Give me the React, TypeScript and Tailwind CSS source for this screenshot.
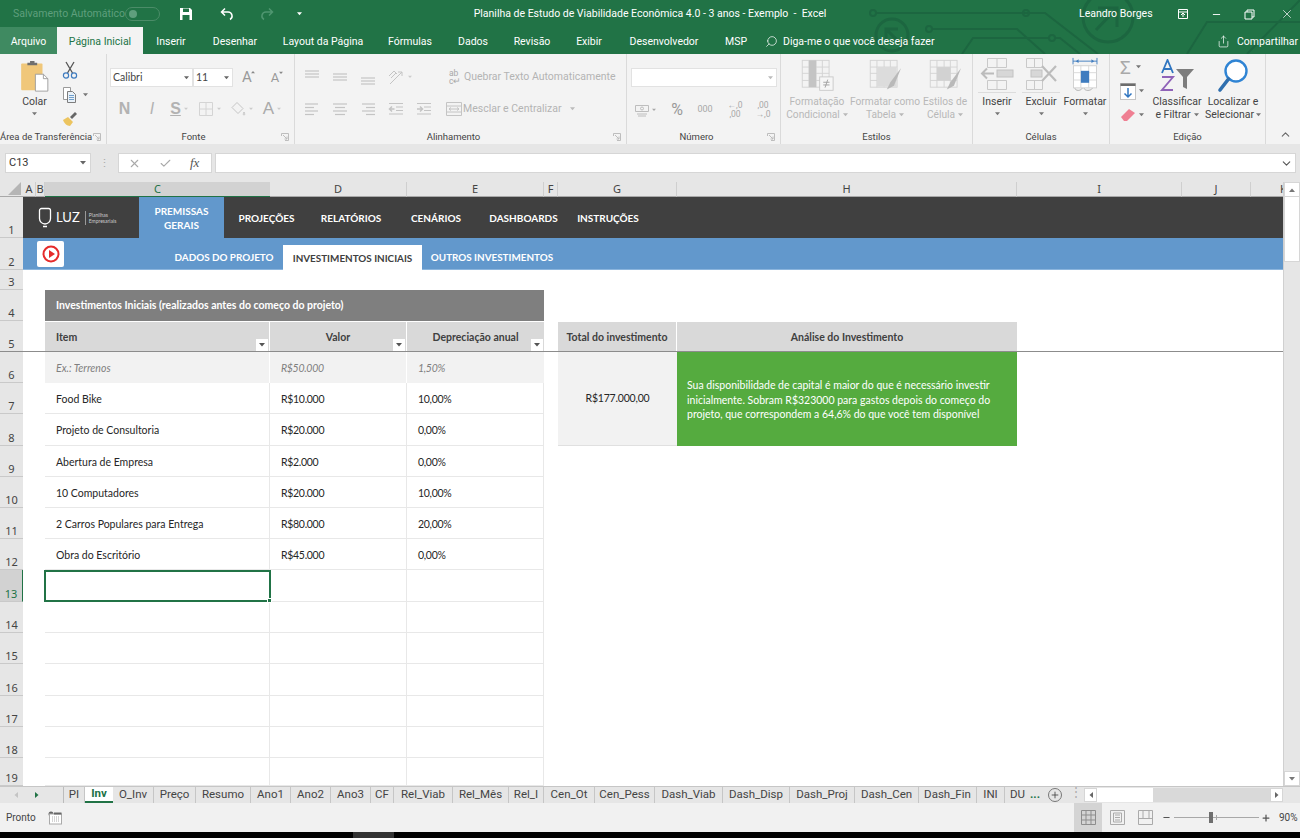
import type { ReactNode } from "react";
import { ChevronDown, ChevronUp, Search, Share, X, Check, Plus, Minus } from "lucide-react";

const dim = "#c4c4c4";

function Caret({ className = "" }: { className?: string }) {
  return (
    <svg width="6" height="4" viewBox="0 0 6 4" className={className}>
      <path d="M0 0h6L3 3.5z" fill="currentColor" />
    </svg>
  );
}

function Launcher() {
  return (
    <svg width="8" height="8" viewBox="0 0 8 8" className="absolute right-[5px] bottom-[3px] text-[#bdbdbd]">
      <path d="M.5 3V.5H7.5V7.5H4M2 2l4 4M6 3.5V6H3.5" fill="none" stroke="currentColor" strokeWidth="1" />
    </svg>
  );
}

function Group({ className, label, launcher, children }: { className: string; label: string; launcher?: boolean; children: ReactNode }) {
  return (
    <div className={"relative flex flex-col h-full border-r border-[#dadada] shrink-0 " + className}>
      <div className="flex-1 min-h-0 flex">{children}</div>
      <div className={"h-[14px] text-center text-[9.500px] leading-[14px] text-[#444] whitespace-nowrap " + (launcher ? "pr-[14px]" : "")}>{label}</div>
      {launcher && <Launcher />}
    </div>
  );
}

function Lines({ ys, xs }: { ys: number[]; xs: [number, number][] }) {
  return (
    <svg width="16" height="16" viewBox="0 0 16 16">
      {ys.map((y, i) => (
        <line key={i} x1={xs[i][0]} x2={xs[i][1]} y1={y} y2={y} stroke={dim} strokeWidth="1.2" />
      ))}
    </svg>
  );
}

function PasteIcon() {
  return (
    <svg width="29" height="32" viewBox="0 0 32 36">
      <rect x="1" y="4" width="24" height="30" rx="1" fill="#f0c77a" />
      <path d="M8 6V3h3V1h5v2h3v3z" fill="#6f6f6f" />
      <path d="M17 16h9l5 5v14H17z" fill="#fff" stroke="#9a9a9a" />
      <path d="M26 16v5h5" fill="none" stroke="#9a9a9a" />
    </svg>
  );
}

function ScissorsIcon() {
  return (
    <svg width="16" height="18" viewBox="0 0 16 18">
      <path d="M4 1l6.5 11M12 1L5.500 12" stroke="#555" strokeWidth="1.3" fill="none" />
      <circle cx="4" cy="14.5" r="2.6" fill="none" stroke="#3f7cbf" strokeWidth="1.2" />
      <circle cx="12" cy="14.5" r="2.6" fill="none" stroke="#3f7cbf" strokeWidth="1.2" />
    </svg>
  );
}

function CopyIcon() {
  return (
    <svg width="16" height="18" viewBox="0 0 16 18">
      <path d="M1.5 1.5h7v12h-7z" fill="#fff" stroke="#9a9a9a" />
      <path d="M5.5 5.500h5l3 3v8h-8z" fill="#e9f1f8" stroke="#7d7d7d" />
      <path d="M7 9.500h5M7 11.500h5M7 13.500h5" stroke="#6f9fcc" />
    </svg>
  );
}

function BrushIcon() {
  return (
    <svg width="16" height="16" viewBox="0 0 16 16">
      <path d="M1 9l5-3 5 5-3 4c-3 0-6-3-7-6z" fill="#ecc45f" />
      <path d="M8 6l5-5 2 2-5 5z" fill="#666" />
    </svg>
  );
}

function AlignIcon({ kind }: { kind: "l" | "c" | "r" }) {
  const xs: Record<string, [number, number][]> = {
    l: [[1, 14], [1, 10], [1, 14], [1, 10]],
    c: [[1, 15], [3, 13], [1, 15], [3, 13]],
    r: [[2, 15], [6, 15], [2, 15], [6, 15]],
  };
  return <Lines ys={[3, 6.5, 10, 13.5]} xs={xs[kind]} />;
}

function IndentIcon({ flip }: { flip?: boolean }) {
  return (
    <svg width="16" height="16" viewBox="0 0 16 16" fill="none" stroke={dim} strokeWidth="1.2">
      <path d="M1 2.500h14M8 6h7M8 9.500h7M1 13h14" />
      {flip ? <path d="M1 8h5M4 5.500L6.500 8 4 10.500" strokeWidth="1.500" /> : <path d="M6.500 8h-5M4 5.500L1.500 8 4 10.500" strokeWidth="1.500" />}
    </svg>
  );
}

function MatrixIcon({ children }: { children?: ReactNode }) {
  return (
    <svg width="36" height="34" viewBox="0 0 40 38">
      <g fill="none" stroke="#d2d2d2">
        <rect x="3.500" y="1.500" width="30" height="30" />
        <path d="M3.500 9h30M3.500 16h30M3.500 24h30M11 1.500v30M19 1.500v30M26 1.500v30" />
      </g>
      {children}
    </svg>
  );
}

function InsertIcon() {
  return (
    <svg width="34" height="34" viewBox="0 0 34 34" fill="none">
      <path d="M7.500 1.500h19v9h-19zM17 1.500v9M7.500 23.500h19v9h-19zM17 23.500v9" stroke="#c9c9c9" />
      <rect x="17" y="13" width="16" height="7" fill="#d7d7d7" stroke="#c2c2c2" />
      <path d="M14 16.500H2M7 11.500l-5 5 5 5" stroke="#bcbcbc" strokeWidth="2" />
    </svg>
  );
}

function DeleteIcon() {
  return (
    <svg width="34" height="34" viewBox="0 0 34 34" fill="none">
      <path d="M2.500 1.500h16v9h-16zM10.500 1.500v9M2.500 23.500h16v9h-16zM10.500 23.500v9" stroke="#c9c9c9" />
      <rect x="7" y="13" width="11" height="7" fill="#d7d7d7" stroke="#c2c2c2" />
      <path d="M18 9l14 15M32 9L18 24" stroke="#bcbcbc" strokeWidth="2.200" />
    </svg>
  );
}

function FormatIcon() {
  return (
    <svg width="28" height="35" viewBox="0 0 30 38" fill="none">
      <path d="M2 4.500h26M2 1v7M28 1v7" stroke="#3f7cbf" />
      <path d="M5 4.500l3-2v4zM25 4.500l-3-2v4z" fill="#3f7cbf" />
      <rect x="2.500" y="9.500" width="25" height="24" fill="#fff" stroke="#cfcfcf" />
      <path d="M2.500 17h25M2.500 25h25M10.500 9.500v24M19 9.500v24" stroke="#d8d8d8" />
      <rect x="10.500" y="15" width="9" height="13" fill="#3f7cbf" />
      <path d="M4 34c1 3 6 3 8 0M14 34c1 3 7 3 9 0" stroke="#aaa" />
    </svg>
  );
}

function SortIcon() {
  return (
    <svg width="36" height="34" viewBox="0 0 36 34" fill="none">
      <path d="M17 10h18l-7 8v12l-4-2V18z" fill="#7d7d7d" />
      <path d="M3 14L8.500 1 14 14M5 10h7" stroke="#2f75c0" strokeWidth="1.800" />
      <path d="M3 18h11L3 31h11" stroke="#8f62b8" strokeWidth="1.900" />
    </svg>
  );
}

function FindIcon() {
  return (
    <svg width="32" height="34" viewBox="0 0 32 34" fill="none">
      <circle cx="19" cy="12" r="10.500" stroke="#2f84d4" strokeWidth="2.400" fill="#fff" />
      <path d="M11.500 20L3 31" stroke="#2f6fae" strokeWidth="3.600" strokeLinecap="round" />
    </svg>
  );
}

function Sel({ className, text }: { className: string; text: string }) {
  return (
    <div className={"h-[19px] bg-white border border-[#e2e2e2] flex items-center justify-between pl-[2px] pr-[3px] text-[10.500px] font-['Lato',sans-serif] text-[#444] " + className}>
      <span>{text}</span>
      <Caret className="w-[5px] text-[#666]" />
    </div>
  );
}

function GrowA({ size, down }: { size: string; down?: boolean }) {
  return (
    <span className={"w-[28px] relative text-center leading-none text-[#999] " + size}>
      A
      <Caret className={"absolute right-[6px] top-0 w-[4px] text-[#888] " + (down ? "" : "rotate-180")} />
    </span>
  );
}

function Ribbon() {
  return (
    <div className="h-[90px] bg-[#f3f3f3] flex shrink-0 text-[#444]">
      <Group className="w-[107px]" label="Área de Transferência" launcher>
        <div className="w-[62px] pl-[20px] pt-[6px] flex flex-col items-start">
          <PasteIcon />
          <div className="w-[29px] text-center text-[10.500px] leading-[13px] mt-[3px]">Colar</div>
          <Caret className="ml-[12px] mt-[4px] w-[5px] text-[#777]" />
        </div>
        <div className="flex flex-col items-start pt-[7px] gap-[7px]">
          <ScissorsIcon />
          <div className="flex items-center gap-[5px]">
            <CopyIcon />
            <Caret className="w-[5px] text-[#777]" />
          </div>
          <BrushIcon />
        </div>
      </Group>

      <Group className="w-[188px]" label="Fonte" launcher>
        <div className="pl-[3px] pt-[14px] flex flex-col">
          <div className="flex items-center">
            <Sel className="w-[83px]" text="Calibri" />
            <Sel className="w-[40px]" text="11" />
            <GrowA size="text-[15px]" />
            <GrowA size="text-[13px]" down />
          </div>
          <div className="flex items-center mt-[13px] font-['Liberation_Sans',sans-serif] text-[#b2b2b2]">
            <span className="w-[28px] pl-[1px] text-center text-[16px] font-bold leading-none">N</span>
            <span className="w-[28px] text-center text-[16px] italic leading-none">I</span>
            <span className="w-[26px] flex items-center justify-center gap-[3px] text-[16px] font-bold underline leading-none">
              S <Caret className="w-[4px] text-[#ccc]" />
            </span>
            <span className="w-[34px] flex items-center justify-center gap-[3px]">
              <svg width="16" height="16" viewBox="0 0 16 16" fill="none" stroke="#d4d4d4">
                <path d="M1.500 1.500h13v13h-13zM8 1.500v13M1.500 8h13" />
              </svg>
              <Caret className="w-[4px] text-[#ccc]" />
            </span>
            <span className="w-[30px] flex items-center justify-center gap-[3px]">
              <svg width="16" height="16" viewBox="0 0 16 16" fill="none" stroke="#c6c6c6">
                <path d="M7 1.500l6 6-5 5-6-6zM14 11c1 2 1 3 0 3s-1-1 0-3z" />
              </svg>
              <Caret className="w-[4px] text-[#ccc]" />
            </span>
            <span className="w-[32px] flex items-center justify-center gap-[3px] text-[17px] leading-none text-[#aaa]">
              A <Caret className="w-[4px] text-[#ccc]" />
            </span>
          </div>
        </div>
      </Group>

      <Group className="w-[332px]" label="Alinhamento" launcher>
        <div className="pl-[9px] pt-[12px] flex flex-col">
          <div className="flex items-center h-[22px] text-[#b4b4b4] text-[10.500px] whitespace-nowrap">
            <span className="w-[28px]"><Lines ys={[2, 5, 8]} xs={[[1, 15], [1, 15], [1, 15]]} /></span>
            <span className="w-[28px]"><Lines ys={[5, 8, 11]} xs={[[1, 15], [1, 15], [1, 15]]} /></span>
            <span className="w-[28px]"><Lines ys={[9, 12, 15]} xs={[[1, 15], [1, 15], [1, 15]]} /></span>
            <span className="w-[61px] flex items-center gap-[2px]">
              <svg width="18" height="16" viewBox="0 0 18 16" fill="none" stroke="#c4c4c4">
                <path d="M2 15L14 3M14 3h-4M14 3v4M1 7l5-5 3 3M3 9l5-5" />
              </svg>
              <Caret className="w-[4px] text-[#ccc]" />
            </span>
            <span className="w-[15px] text-[8.500px] leading-[8px] text-[#a8a8a8]">ab<br />c↵</span>
            <span>Quebrar Texto Automaticamente</span>
          </div>
          <div className="flex items-center h-[22px] mt-[10px] text-[#b4b4b4] text-[10.500px] whitespace-nowrap">
            <span className="w-[28px]"><AlignIcon kind="l" /></span>
            <span className="w-[28px]"><AlignIcon kind="c" /></span>
            <span className="w-[28px]"><AlignIcon kind="r" /></span>
            <span className="w-[28px]"><IndentIcon /></span>
            <span className="w-[30px]"><IndentIcon flip /></span>
            <span className="w-[17px]">
              <svg width="16" height="16" viewBox="0 0 16 16" fill="none" stroke="#c4c4c4">
                <path d="M.5 1.500h15v13H.5zM.5 5h15M.5 11h15M3 8h10M5 6.500L3 8l2 1.500M11 6.500L13 8l-2 1.500" />
              </svg>
            </span>
            <span>Mesclar e Centralizar</span>
            <Caret className="ml-[8px] w-[5px] text-[#bbb]" />
          </div>
        </div>
      </Group>

      <Group className="w-[154px]" label="Número" launcher>
        <div className="pl-[4px] pt-[14px] flex flex-col">
          <div className="w-[146px] h-[19px] bg-white border border-[#e2e2e2] flex items-center justify-end pr-[3px]">
            <Caret className="w-[5px] text-[#bbb]" />
          </div>
          <div className="flex items-center h-[22px] mt-[12px] text-[#a8a8a8]">
            <span className="w-[34px] flex items-center gap-[3px] pl-[4px]">
              <svg width="14" height="14" viewBox="0 0 14 14" fill="none" stroke="#bdbdbd">
                <path d="M.5 2.500h13v6H.5z" /><circle cx="7" cy="5.500" r="1.500" /><path d="M2 11h10M3 13h8" />
              </svg>
              <Caret className="w-[4px]" />
            </span>
            <span className="w-[24px] text-center text-[16px] leading-none text-[#999]">%</span>
            <span className="w-[32px] text-center text-[9px]">000</span>
            <span className="w-[28px] text-center text-[8.500px] leading-[9px]">←,0<br />,00</span>
            <span className="w-[28px] text-center text-[8.500px] leading-[9px]">,00<br />→,0</span>
          </div>
        </div>
      </Group>

      <Group className="w-[192px]" label="Estilos">
        <div className="pl-[7px] flex text-[10.200px] leading-[13px] text-[#b8b8b8] text-center whitespace-nowrap pt-[5px]">
          <div className="w-[58px] flex flex-col items-center">
            <MatrixIcon>
              <rect x="11" y="1.500" width="8" height="30" fill="#c4c4c4" />
              <rect x="23" y="20" width="15" height="15" fill="#f6f6f6" stroke="#c8c8c8" />
              <path d="M27 26h7M27 29h7M32 23l-3 9" stroke="#9d9d9d" />
            </MatrixIcon>
            <div className="mt-[2px]">Formatação</div>
            <div className="flex items-center gap-[3px]">Condicional <Caret className="w-[5px]" /></div>
          </div>
          <div className="w-[78px] flex flex-col items-center">
            <MatrixIcon>
              <rect x="11" y="9" width="22" height="22" fill="#dcdcdc" />
              <path d="M38 10L26 26l-4 8 8-4z" fill="#b9b9b9" />
            </MatrixIcon>
            <div className="mt-[2px]">Formatar como</div>
            <div className="flex items-center gap-[3px]">Tabela <Caret className="w-[5px]" /></div>
          </div>
          <div className="w-[42px] flex flex-col items-center">
            <MatrixIcon>
              <rect x="11" y="9" width="15" height="15" fill="#d2d2d2" />
              <path d="M38 10L26 26l-4 8 8-4z" fill="#b9b9b9" />
            </MatrixIcon>
            <div className="mt-[2px]">Estilos de</div>
            <div className="flex items-center gap-[3px]">Célula <Caret className="w-[5px]" /></div>
          </div>
        </div>
      </Group>

      <Group className="w-[137px]" label="Células">
        <div className="pl-[2px] pt-[3px] flex text-[10.500px] leading-[13px] text-center text-[#444]">
          <div className="w-[44px] flex flex-col items-center">
            <div className="h-[36px] w-[38px] flex justify-center border-b border-[#dcdcdc]"><InsertIcon /></div>
            <div className="mt-[2px]">Inserir</div>
            <Caret className="mt-[4px] w-[5px] text-[#777]" />
          </div>
          <div className="w-[44px] flex flex-col items-center">
            <div className="h-[36px] w-[38px] flex justify-center border-b border-[#dcdcdc]"><DeleteIcon /></div>
            <div className="mt-[2px]">Excluir</div>
            <Caret className="mt-[4px] w-[5px] text-[#777]" />
          </div>
          <div className="w-[44px] flex flex-col items-center">
            <div className="h-[36px]"><FormatIcon /></div>
            <div className="mt-[2px]">Formatar</div>
            <Caret className="mt-[4px] w-[5px] text-[#777]" />
          </div>
        </div>
      </Group>

      <Group className="w-[156px]" label="Edição">
        <div className="flex text-[10.500px] leading-[13px] text-center text-[#444] whitespace-nowrap">
          <div className="w-[38px] pl-[10px] pt-[4px] flex flex-col gap-[6px]">
            <div className="flex items-center gap-[5px] h-[18px]">
              <span className="text-[19px] leading-none text-[#a9a9a9]">Σ</span>
              <Caret className="w-[5px] text-[#777]" />
            </div>
            <div className="flex items-center gap-[3px] h-[18px]">
              <svg width="16" height="17" viewBox="0 0 16 17" fill="none">
                <rect x=".5" y=".5" width="15" height="16" fill="#fff" stroke="#c5c5c5" />
                <rect x=".5" y=".5" width="15" height="2.500" fill="#6c6c6c" />
                <path d="M8 5v9M4.500 10.500L8 14l3.500-3.500" stroke="#2f75c0" strokeWidth="1.500" />
              </svg>
              <Caret className="w-[5px] text-[#777]" />
            </div>
            <div className="flex items-center gap-[3px] h-[18px]">
              <svg width="16" height="14" viewBox="0 0 16 14">
                <path d="M1 9l8-8 6 4-8 8H4z" fill="#ef7f92" />
              </svg>
              <Caret className="w-[5px] text-[#777]" />
            </div>
          </div>
          <div className="w-[58px] pt-[5px] flex flex-col items-center">
            <div className="h-[34px]"><SortIcon /></div>
            <div className="mt-[2px]">Classificar</div>
            <div className="flex items-center gap-[3px]">e Filtrar <Caret className="w-[5px] text-[#777]" /></div>
          </div>
          <div className="w-[54px] pt-[5px] flex flex-col items-center">
            <div className="h-[34px]"><FindIcon /></div>
            <div className="mt-[2px]">Localizar e</div>
            <div className="flex items-center gap-[2px]">Selecionar <Caret className="w-[5px] text-[#777]" /></div>
          </div>
        </div>
      </Group>

      <div className="flex-1 flex justify-end items-end pr-[8px] pb-[3px]">
        <ChevronUp size={13} className="text-[#666]" />
      </div>
    </div>
  );
}

function Circuit() {
  return (
    <svg width="460" height="54" viewBox="0 0 460 54" fill="none" stroke="#1c6640" strokeWidth="2" className="absolute right-0 top-0">
      <path d="M36 13H205L258 54M92 29H177L205 54M122 54L133 38H209M215 38H220L240 54" />
      <circle cx="33" cy="13" r="3" />
      <circle cx="186" cy="13" r="3" />
      <circle cx="89" cy="29" r="3" />
      <circle cx="212" cy="38" r="3" />
      <circle cx="52" cy="35" r="16" strokeWidth="3" />
      <path d="M46 41V29H58M46 29L60 43" strokeWidth="3" />
      <circle cx="268" cy="17" r="25" strokeWidth="3" />
      <path d="M258 8H277V27M277 8L256 30" strokeWidth="3" />
      <path d="M347 54L367 22H460M407 54L460 0" />
    </svg>
  );
}

function TitleBar() {
  return (
    <div className="h-[27px] pt-[1px] flex items-center relative shrink-0 text-[10.500px] text-white">
      <span className="ml-[13px] w-[112px] text-[#5f9f7d] whitespace-nowrap">Salvamento Automático</span>
      <span className="w-[35px] h-[14px] rounded-full border border-[#4b8c68] flex items-center pl-[3px]">
        <span className="w-[8px] h-[8px] rounded-full bg-[#5f9f7d]" />
      </span>
      <svg width="14" height="14" viewBox="0 0 14 14" className="ml-[19px]">
        <path d="M1 1h10l2 2v10H1z" fill="#fff" />
        <path d="M4 1.500h6v3.500H4z" fill="#217346" />
        <path d="M3.500 8h7v5h-7z" fill="#217346" />
      </svg>
      <svg width="14" height="14" viewBox="0 0 14 14" fill="none" stroke="#fff" strokeWidth="1.500" className="ml-[27px]">
        <path d="M5 1.500L1.500 5 5 8.500M1.500 5H8a4 4 0 0 1 2 7.500" />
      </svg>
      <svg width="14" height="14" viewBox="0 0 14 14" fill="none" stroke="#4f9670" strokeWidth="1.500" className="ml-[26px]">
        <path d="M9 1.500L12.500 5 9 8.500M12.500 5H6a4 4 0 0 0-2 7.500" />
      </svg>
      <Caret className="ml-[23px] w-[5px] text-white" />
      <span className="ml-[168px] w-[360px] text-center whitespace-nowrap">Planilha de Estudo de Viabilidade Econômica 4.0 - 3 anos - Exemplo&nbsp; -&nbsp; Excel</span>
      <span className="ml-[249px] z-10 w-[72px] whitespace-nowrap">Leandro Borges</span>
      <svg width="12" height="12" viewBox="0 0 12 12" fill="none" stroke="#fff" className="ml-[26px] z-10">
        <path d="M1.500 1.500h9v9h-9zM1.500 4h9M6 9V5.500M4 7l2-2 2 2" />
      </svg>
      <Minus size={11} className="ml-[22px] z-10" />
      <svg width="11" height="11" viewBox="0 0 11 11" fill="none" stroke="#fff" className="ml-[22px] z-10">
        <path d="M1 3h7v7H1zM3 3V1h7v7H8" />
      </svg>
      <X size={14} strokeWidth={1.2} className="ml-[25px] z-10" />
    </div>
  );
}

function MenuTabs() {
  const tabs = [
    ["Inserir", "w-[56px]"],
    ["Desenhar", "w-[72px]"],
    ["Layout da Página", "w-[104px]"],
    ["Fórmulas", "w-[70px]"],
    ["Dados", "w-[56px]"],
    ["Revisão", "w-[62px]"],
    ["Exibir", "w-[52px]"],
    ["Desenvolvedor", "w-[98px]"],
    ["MSP", "w-[46px]"],
  ];
  return (
    <div className="h-[27px] flex relative shrink-0 text-[10.500px] text-white whitespace-nowrap">
      <div className="w-[57px] pt-[2px] bg-[#3f8a61] flex items-center justify-center">Arquivo</div>
      <div className="w-[86px] pt-[2px] bg-[#f3f3f3] text-[#217346] flex items-center justify-center">Página Inicial</div>
      {tabs.map(([t, w]) => (
        <div key={t} className={"pt-[2px] flex items-center justify-center " + w}>{t}</div>
      ))}
      <Search size={13} strokeWidth={1.3} className="self-center mt-[2px] ml-[6px] -scale-x-100" />
      <span className="self-center mt-[2px] ml-[5px] w-[434px] z-10">Diga-me o que você deseja fazer</span>
      <Share size={13} strokeWidth={1.3} className="self-center mt-[2px] z-10" />
      <span className="self-center mt-[2px] ml-[7px] z-10">Compartilhar</span>
    </div>
  );
}

function FormulaBar() {
  return (
    <div className="h-[38px] bg-[#e6e6e6] flex items-center shrink-0 pl-[5px] text-[11px] text-[#333]">
      <div className="w-[86px] h-[20px] bg-white border border-[#d6d6d6] flex items-center justify-between px-[3px]">
        <span>C13</span>
        <Caret className="w-[6px] mr-[1px] text-[#666]" />
      </div>
      <span className="w-[27px] text-center text-[#aaa] leading-none">⋮</span>
      <div className="w-[94px] h-[20px] bg-white border border-[#d6d6d6] flex items-center text-[#a9a9a9]">
        <X size={13} className="ml-[9px]" />
        <Check size={13} className="ml-[18px]" />
        <span className="ml-[18px] text-[#555] italic font-['Liberation_Serif',serif] text-[13px]">fx</span>
      </div>
      <div className="ml-[3px] w-[1081px] h-[20px] bg-white border border-[#d6d6d6] flex items-center justify-end pr-[2px]">
        <ChevronDown size={13} className="text-[#555]" />
      </div>
    </div>
  );
}

const colHeads = [
  { l: "A", c: "col-start-2" },
  { l: "B", c: "col-start-3" },
  { l: "C", c: "col-start-4", on: true },
  { l: "D", c: "col-start-5" },
  { l: "E", c: "col-start-6" },
  { l: "F", c: "col-start-7" },
  { l: "G", c: "col-start-8" },
  { l: "H", c: "col-start-9" },
  { l: "I", c: "col-start-10" },
  { l: "J", c: "col-start-11" },
];

const rowHeads = [
  { n: 1, c: "row-start-2" },
  { n: 2, c: "row-start-3" },
  { n: 3, c: "row-start-4" },
  { n: 4, c: "row-start-5" },
  { n: 5, c: "row-start-6" },
  { n: 6, c: "row-start-7" },
  { n: 7, c: "row-start-8" },
  { n: 8, c: "row-start-9" },
  { n: 9, c: "row-start-10" },
  { n: 10, c: "row-start-11" },
  { n: 11, c: "row-start-12" },
  { n: 12, c: "row-start-13" },
  { n: 13, c: "row-start-14", on: true },
  { n: 14, c: "row-start-15" },
  { n: 15, c: "row-start-16" },
  { n: 16, c: "row-start-17" },
  { n: 17, c: "row-start-18" },
  { n: 18, c: "row-start-19" },
  { n: 19, c: "row-start-20" },
];

const bodyRows = [
  { c: "row-start-8", item: "Food Bike", val: "R$10.000", dep: "10,00%" },
  { c: "row-start-9", item: "Projeto de Consultoria", val: "R$20.000", dep: "0,00%" },
  { c: "row-start-10", item: "Abertura de Empresa", val: "R$2.000", dep: "0,00%" },
  { c: "row-start-11", item: "10 Computadores", val: "R$20.000", dep: "10,00%" },
  { c: "row-start-12", item: "2 Carros Populares para Entrega", val: "R$80.000", dep: "20,00%" },
  { c: "row-start-13", item: "Obra do Escritório", val: "R$45.000", dep: "0,00%" },
  { c: "row-start-14", item: "", val: "", dep: "" },
  { c: "row-start-15", item: "", val: "", dep: "" },
  { c: "row-start-16", item: "", val: "", dep: "" },
  { c: "row-start-17", item: "", val: "", dep: "" },
  { c: "row-start-18", item: "", val: "", dep: "" },
  { c: "row-start-19", item: "", val: "", dep: "" },
  { c: "row-start-20", item: "", val: "", dep: "" },
];

function FilterBtn() {
  return (
    <span className="absolute right-0 bottom-0 w-[14px] h-[14px] bg-white border border-[#d9d9d9] flex items-center justify-center text-[#555]">
      <Caret className="w-[6px]" />
    </span>
  );
}

const cellBase = "flex items-center pl-[11px] pt-[3px] border-r border-b border-[#e8e8e8] text-[10.500px] text-[#262626] whitespace-nowrap";

function Sheet() {
  return (
    <div className="flex h-[604px] shrink-0 bg-white">
      <div className="grid w-[1283px] grid-cols-[23px_13px_9px_225px_137px_137px_14px_119px_340px_165px_69px_32px] grid-rows-[15px_41px_32px_20px_31px_31px_31px_31px_32px_31px_31px_31px_31px_32px_31px_31px_32px_31px_31px_28px] font-['Lato',sans-serif]">
        <div className="col-start-1 row-start-1 bg-[#e6e6e6] border-b border-[#a8a8a8] flex items-end justify-end">
          <svg width="13" height="13" viewBox="0 0 13 13" className="mr-[2px] mb-[1px]"><path d="M13 0v13H0z" fill="#b5b5b5" /></svg>
        </div>
        {colHeads.map((h) => (
          <div
            key={h.c}
            className={
              "row-start-1 flex items-center justify-center text-[11px] font-['Noto_Sans',sans-serif] " +
              h.c +
              (h.on
                ? " bg-[#d2d2d2] text-[#217346] border-b border-[#217346]"
                : " bg-[#e6e6e6] text-[#444] border-r border-b border-r-[#cfcfcf] border-b-[#a8a8a8]")
            }
          >
            {h.l}
          </div>
        ))}
        <div className="col-start-12 row-start-1 bg-[#e6e6e6] border-b border-[#a8a8a8] overflow-hidden pl-[29px] text-[11px] leading-[14px] text-[#444] font-['Noto_Sans',sans-serif]">K</div>
        {rowHeads.map((r) => (
          <div
            key={r.n}
            className={
              "col-start-1 flex items-end justify-center text-[11px] leading-[15px] font-['Noto_Sans',sans-serif] border-b border-[#c9c9c9] " +
              r.c +
              (r.on ? " bg-[#d2d2d2] text-[#217346] border-r border-r-[#217346]" : " bg-[#e6e6e6] text-[#444]")
            }
          >
            {r.n}
          </div>
        ))}

        <div className="col-start-2 col-span-11 row-start-2 bg-[#404040] flex text-white text-[10px] font-bold whitespace-nowrap">
          <div className="w-[116px] flex items-center pl-[15px] font-normal">
            <svg width="14" height="22" viewBox="0 0 14 22" fill="none" stroke="#fff" strokeWidth="1.300">
              <path d="M3.500 1.500h7a2 2 0 0 1 2 2v8a5.500 5.500 0 0 1-11 0v-8a2 2 0 0 1 2-2zM5 19.500h4" />
            </svg>
            <span className="ml-[4px] text-[13px]">LUZ</span>
            <span className="ml-[5px] h-[14px] w-px bg-[#999]" />
            <span className="ml-[3px] text-[5px] leading-[6px] text-[#ccc]">Planilhas<br />Empresariais</span>
          </div>
          <div className="w-[85px] bg-[#6298cc] flex items-center justify-center text-center leading-[14px]">PREMISSAS<br />GERAIS</div>
          <div className="w-[85px] pt-[1px] flex items-center justify-center">PROJEÇÕES</div>
          <div className="w-[84px] pt-[1px] flex items-center justify-center">RELATÓRIOS</div>
          <div className="w-[86px] pt-[1px] flex items-center justify-center">CENÁRIOS</div>
          <div className="w-[89px] pt-[1px] flex items-center justify-center">DASHBOARDS</div>
          <div className="w-[80px] pt-[1px] flex items-center justify-center">INSTRUÇÕES</div>
        </div>

        <div className="col-start-2 col-span-11 row-start-3 bg-[#6298cc] border-b border-[#8bb5dd] flex items-end text-white text-[9.900px] font-bold whitespace-nowrap">
          <div className="ml-[14px] mb-[2px] w-[27px] h-[26px] bg-white rounded-[2px] flex items-center justify-center">
            <svg width="18" height="18" viewBox="0 0 18 18" fill="none">
              <circle cx="9" cy="9" r="7.500" stroke="#e52b2b" strokeWidth="2" />
              <path d="M7 5l6 4-6 4z" fill="#e52b2b" />
            </svg>
          </div>
          <div className="ml-[111px] w-[98px] h-[25px] pt-[1px] flex items-center justify-center">DADOS DO PROJETO</div>
          <div className="ml-[10px] w-[139px] h-[25px] -mb-px pt-[1px] bg-white text-[#404040] flex items-center justify-center">INVESTIMENTOS INICIAIS</div>
          <div className="ml-[9px] w-[122px] h-[25px] pt-[1px] flex items-center justify-center">OUTROS INVESTIMENTOS</div>
        </div>

        <div className="col-start-4 col-span-3 row-start-5 bg-[#7f7f7f] text-white font-bold text-[10.500px] flex items-center pl-[11px]">
          Investimentos Iniciais (realizados antes do começo do projeto)
        </div>

        <div className="col-start-4 row-start-6 relative bg-[#d9d9d9] border-t border-r border-white pt-[2px] text-[#404040] font-bold text-[10.500px] flex items-center pl-[11px]">
          Item
          <FilterBtn />
        </div>
        <div className="col-start-5 row-start-6 relative bg-[#d9d9d9] border-t border-r border-white pt-[2px] text-[#404040] font-bold text-[10.500px] flex items-center justify-center">
          Valor
          <FilterBtn />
        </div>
        <div className="col-start-6 row-start-6 relative bg-[#d9d9d9] border-t border-white pt-[2px] text-[#404040] font-bold text-[10.500px] flex items-center justify-center">
          Depreciação anual
          <FilterBtn />
        </div>

        <div className="col-start-4 row-start-7 bg-[#f2f2f2] border-r border-white pt-[2px] italic text-[#7f7f7f] text-[10.500px] flex items-center pl-[11px]">Ex.: Terrenos</div>
        <div className="col-start-5 row-start-7 bg-[#f2f2f2] border-r border-white pt-[2px] italic text-[#7f7f7f] text-[10.500px] tracking-[-0.3px] flex items-center pl-[11px]">R$50.000</div>
        <div className="col-start-6 row-start-7 bg-[#f2f2f2] pt-[2px] italic text-[#7f7f7f] text-[10.500px] tracking-[-0.3px] flex items-center pl-[11px]">1,50%</div>

        {bodyRows.map((r) => (
          <div key={r.c} className={"col-start-4 col-span-3 grid grid-cols-[225px_137px_137px] " + r.c}>
            <div className={cellBase}>{r.item}</div>
            <div className={cellBase + " tracking-[-0.3px]"}>{r.val}</div>
            <div className={cellBase + " tracking-[-0.3px]"}>{r.dep}</div>
          </div>
        ))}

        <div className="col-start-4 row-start-14 relative z-10 -ml-[1px] -mr-[1px] border-2 border-[#217346]">
          <span className="absolute -right-[3px] -bottom-[3px] w-[5px] h-[5px] bg-[#217346] border border-white" />
        </div>

        <div className="col-start-8 row-start-6 bg-[#d9d9d9] border-t border-r border-white pt-[2px] text-[#404040] font-bold text-[10.500px] flex items-center justify-center">Total do investimento</div>
        <div className="col-start-9 row-start-6 bg-[#d9d9d9] border-t border-white pt-[2px] text-[#404040] font-bold text-[10.500px] flex items-center justify-center">Análise do Investimento</div>
        <div className="col-start-8 row-start-7 row-span-3 bg-[#f2f2f2] border-b border-[#e0e0e0] pt-[1px] text-[#262626] text-[10.500px] tracking-[-0.2px] flex items-center justify-center">R$177.000,00</div>
        <div className="col-start-9 row-start-7 row-span-3 bg-[#55ab3f] text-white text-[10.500px] leading-[14.700px] flex items-center pl-[10px] pr-[10px] pt-[2px]">
          Sua disponibilidade de capital é maior do que é necessário investir inicialmente. Sobram R$323000 para gastos depois do começo do projeto, que correspondem a 64,6% do que você tem disponível
        </div>

        <div className="col-start-1 col-span-12 row-start-6 self-end h-px bg-[#8c8c8c] z-10" />
      </div>
      <div className="flex-1 flex flex-col bg-[#e6e6e6] border-l border-[#d0d0d0]">
        <div className="h-[15px] bg-white border border-[#d6d6d6] flex items-center justify-center text-[#777]"><Caret className="rotate-180" /></div>
        <div className="h-[65px] bg-white border-x border-b border-[#d6d6d6]" />
        <div className="flex-1" />
        <div className="h-[15px] bg-white border border-[#d6d6d6] flex items-center justify-center text-[#777]"><Caret /></div>
      </div>
    </div>
  );
}

const sheetTabs = [
  ["PI", "w-[21px]"],
  ["Inv", "w-[28px]"],
  ["O_Inv", "w-[41px]"],
  ["Preço", "w-[42px]"],
  ["Resumo", "w-[55px]"],
  ["Ano1", "w-[40px]"],
  ["Ano2", "w-[40px]"],
  ["Ano3", "w-[40px]"],
  ["CF", "w-[23px]"],
  ["Rel_Viab", "w-[59px]"],
  ["Rel_Mês", "w-[56px]"],
  ["Rel_I", "w-[35px]"],
  ["Cen_Ot", "w-[51px]"],
  ["Cen_Pess", "w-[60px]"],
  ["Dash_Viab", "w-[68px]"],
  ["Dash_Disp", "w-[67px]"],
  ["Dash_Proj", "w-[65px]"],
  ["Dash_Cen", "w-[64px]"],
  ["Dash_Fin", "w-[58px]"],
  ["INI", "w-[28px]"],
];

function SheetTabs() {
  return (
    <div className="h-[17px] bg-[#e6e6e6] border-t border-[#c6c6c6] flex items-stretch shrink-0 text-[11.500px] leading-none text-[#444] whitespace-nowrap">
      <div className="w-[64px] flex items-center pl-[13px] gap-[15px] border-r border-[#bcbcbc]">
        <Caret className="rotate-90 text-[#c4c4c4]" />
        <Caret className="-rotate-90 text-[#217346]" />
      </div>
      {sheetTabs.map(([t, w]) =>
        t === "Inv" ? (
          <div key={t} className={"bg-white border-b-2 border-[#217346] text-[#217346] font-bold flex items-center justify-center " + w}>{t}</div>
        ) : (
          <div key={t} className={"border-r border-[#c6c6c6] flex items-center justify-center " + w}>{t}</div>
        ),
      )}
      <div className="w-[25px] pl-[5px] flex items-center">DU</div>
      <div className="w-[13px] flex items-center text-[#217346] font-bold">...</div>
      <div className="w-[24px] flex items-center justify-center">
        <span className="w-[14px] h-[14px] rounded-full border border-[#777] flex items-center justify-center"><Plus size={10} /></span>
      </div>
      <span className="w-[17px] text-center text-[#aaa]">⋮</span>
      <div className="w-[199px] flex items-center bg-[#d9d9d9] my-[1px]">
        <span className="w-[13px] h-full bg-white border border-[#d6d6d6] flex items-center justify-center text-[#666]"><Caret className="rotate-90" /></span>
        <span className="w-[56px] h-full bg-white" />
        <span className="flex-1" />
        <span className="w-[13px] h-full bg-white border border-[#d6d6d6] flex items-center justify-center text-[#666]"><Caret className="-rotate-90" /></span>
      </div>
    </div>
  );
}

function StatusBar() {
  return (
    <div className="h-[29px] bg-[#f1f1f1] flex items-center shrink-0 text-[10px] text-[#444]">
      <span className="ml-[6px] w-[42px]">Pronto</span>
      <svg width="14" height="14" viewBox="0 0 14 14" fill="none">
        <circle cx="3" cy="3" r="2.500" fill="#666" />
        <rect x="1.500" y="3" width="12" height="10" fill="#fff" stroke="#aaa" />
        <path d="M6 1.500h7.500v2H6z" fill="#666" />
        <path d="M4 6h7M4 8h7M4 10h7" stroke="#aaa" strokeDasharray="1 1" />
      </svg>
      <div className="ml-[1012px] w-[28px] h-full bg-[#d4d4d4] flex items-center justify-center">
        <svg width="15" height="15" viewBox="0 0 15 15" fill="none" stroke="#8d8d8d"><path d="M.5.500h14v14H.5zM.5 5h14M.5 10h14M5 .500v14M10 .500v14" /></svg>
      </div>
      <div className="w-[28px] flex justify-center ml-[1px]">
        <svg width="15" height="15" viewBox="0 0 15 15" fill="none" stroke="#aaa"><path d="M.500.500h14v14H.500zM3.500 3h8v9h-8zM5 5h5M5 7.500h5M5 10h5" /></svg>
      </div>
      <div className="w-[28px] flex justify-center">
        <svg width="15" height="15" viewBox="0 0 15 15" fill="none" stroke="#aaa"><path d="M.500.500h14v14H.500zM5 .500v8h6V.500M.500 8.500H5M11 8.500h3.500" /></svg>
      </div>
      <Minus size={9} strokeWidth={3} className="ml-[3px] text-[#555]" />
      <div className="ml-[3px] w-[85px] h-px bg-[#a8a8a8] relative">
        <span className="absolute left-[35px] -top-[5px] w-[4px] h-[11px] bg-[#6e6e6e]" />
        <span className="absolute left-[42px] -top-[2px] w-px h-[5px] bg-[#a8a8a8]" />
      </div>
      <Plus size={10} strokeWidth={3} className="ml-[2px] text-[#555]" />
      <span className="ml-[8px]">90%</span>
    </div>
  );
}

export default function App() {
  return (
    <div className="w-[1300px] h-[838px] overflow-hidden flex flex-col font-['Roboto',sans-serif]">
      <div className="relative bg-[#217346] shrink-0">
        <Circuit />
        <TitleBar />
        <MenuTabs />
      </div>
      <Ribbon />
      <FormulaBar />
      <Sheet />
      <SheetTabs />
      <StatusBar />
      <div className="flex-1 bg-black flex">
        <span className="ml-[353px] w-[41px] bg-[#333]" />
      </div>
    </div>
  );
}
